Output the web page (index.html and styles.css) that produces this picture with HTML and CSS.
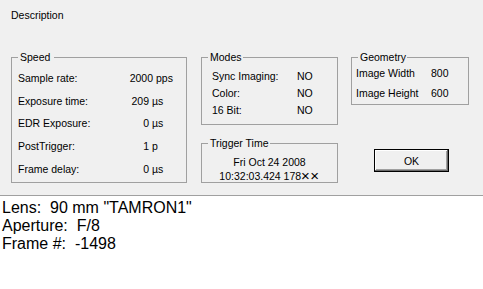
FILE: index.html
```html
<!DOCTYPE html>
<html>
<head>
<meta charset="utf-8">
<link rel="stylesheet" href="styles.css">
</head>
<body>
<div class="dialog">
  <div class="desc">Description</div>
  <div class="columns">
    <div class="group speed">
      <div class="group-title">Speed&nbsp;</div>
      <div class="srow"><span class="slabel">Sample rate:</span><span class="sval">2000</span><span class="sunit narrow">pps</span></div>
      <div class="srow"><span class="slabel">Exposure time:</span><span class="sval">209</span><span class="sunit">µs</span></div>
      <div class="srow"><span class="slabel">EDR Exposure:</span><span class="sval">0</span><span class="sunit">µs</span></div>
      <div class="srow"><span class="slabel">PostTrigger:</span><span class="sval">1</span><span class="sunit">p</span></div>
      <div class="srow"><span class="slabel">Frame delay:</span><span class="sval">0</span><span class="sunit">µs</span></div>
    </div>
    <div class="col-mid">
      <div class="group modes">
        <div class="group-title">Modes</div>
        <div class="mrow"><span class="mlabel">Sync Imaging:</span><span>NO</span></div>
        <div class="mrow"><span class="mlabel">Color:</span><span>NO</span></div>
        <div class="mrow"><span class="mlabel">16 Bit:</span><span>NO</span></div>
      </div>
      <div class="group trigger">
        <div class="group-title">Trigger Time</div>
        <div class="tline">Fri Oct 24 2008</div>
        <div class="tline">10:32:03.424 178<span class="xx">××</span></div>
      </div>
    </div>
    <div class="col-right">
      <div class="group geometry">
        <div class="group-title">Geometry</div>
        <div class="grow"><span class="glabel">Image Width</span><span>800</span></div>
        <div class="grow"><span class="glabel">Image Height</span><span>600</span></div>
      </div>
      <button class="ok">OK</button>
    </div>
  </div>
</div>
<div class="info">
  <div class="line">Lens:  90 mm "TAMRON1"</div>
  <div class="line">Aperture:  F/8</div>
  <div class="line">Frame #:  -1498</div>
</div>
</body>
</html>
```
FILE: styles.css
```css
html, body {
  margin: 0;
  padding: 0;
  width: 483px;
  height: 289px;
  overflow: hidden;
  background: #ffffff;
}

.dialog {
  height: 195px;
  box-sizing: border-box;
  background: #f0f0f0;
  padding: 9px 0 0 0;
  font-family: "Liberation Sans", Arial, sans-serif;
  font-size: 10.5px;
  line-height: 13px;
  color: #000;
}

.desc {
  padding-left: 11px;
}

.columns {
  display: flex;
  align-items: flex-start;
  margin-top: 35px;
  padding-left: 11px;
}

.group {
  position: relative;
  border: 1px solid #a0a0a0;
  box-sizing: border-box;
}

.group-title {
  position: absolute;
  top: -7px;
  left: 6px;
  padding: 0 1px 0 2px;
  background: #f0f0f0;
  white-space: pre;
}

.speed {
  width: 176px;
  height: 126px;
  padding: 9px 0 0 6px;
}

.srow {
  display: flex;
  height: 22.8px;
  align-items: center;
}

.slabel {
  flex: 1;
}

.sval {
  text-align: right;
}

.sunit {
  width: 37px;
  padding-left: 3px;
  box-sizing: border-box;
}

.sunit.narrow {
  width: 33px;
  padding-left: 3px;
}

.col-mid {
  display: flex;
  flex-direction: column;
  margin-left: 14px;
}

.modes {
  width: 137px;
  height: 68px;
  padding: 10px 0 0 10px;
}

.mrow {
  display: flex;
  height: 17px;
  align-items: center;
}

.mlabel {
  width: 85px;
}

.trigger {
  margin-top: 18px;
  width: 137px;
  height: 40px;
  padding-top: 11px;
  text-align: center;
}

.tline {
  height: 14px;
  line-height: 14px;
}

.xx {
  font-size: 15px;
  letter-spacing: 0.5px;
  vertical-align: top;
}

.col-right {
  display: flex;
  flex-direction: column;
  align-items: flex-start;
  margin-left: 13px;
}

.geometry {
  width: 118px;
  height: 48px;
  padding: 5px 0 0 4px;
}

.grow {
  display: flex;
  height: 20px;
  align-items: center;
}

.glabel {
  width: 75px;
}

.ok {
  margin: 44px 0 0 23px;
  width: 75px;
  height: 23px;
  padding: 0;
  font-family: "Liberation Sans", Arial, sans-serif;
  font-size: 10.5px;
  color: #000;
  background: #f0f0f0;
  border: 1px solid #000;
  box-shadow: inset -1px -1px 0 #696969, inset 1px 1px 0 #ffffff, inset -2px -2px 0 #a0a0a0;
}

.info {
  border-top: 1px solid #a0a0a0;
  height: 93px;
  box-sizing: border-box;
  padding: 3px 0 0 2px;
  font-family: "Liberation Sans", Arial, sans-serif;
  font-size: 16px;
  line-height: 18px;
  color: #000;
}

.line {
  white-space: pre;
}
```
